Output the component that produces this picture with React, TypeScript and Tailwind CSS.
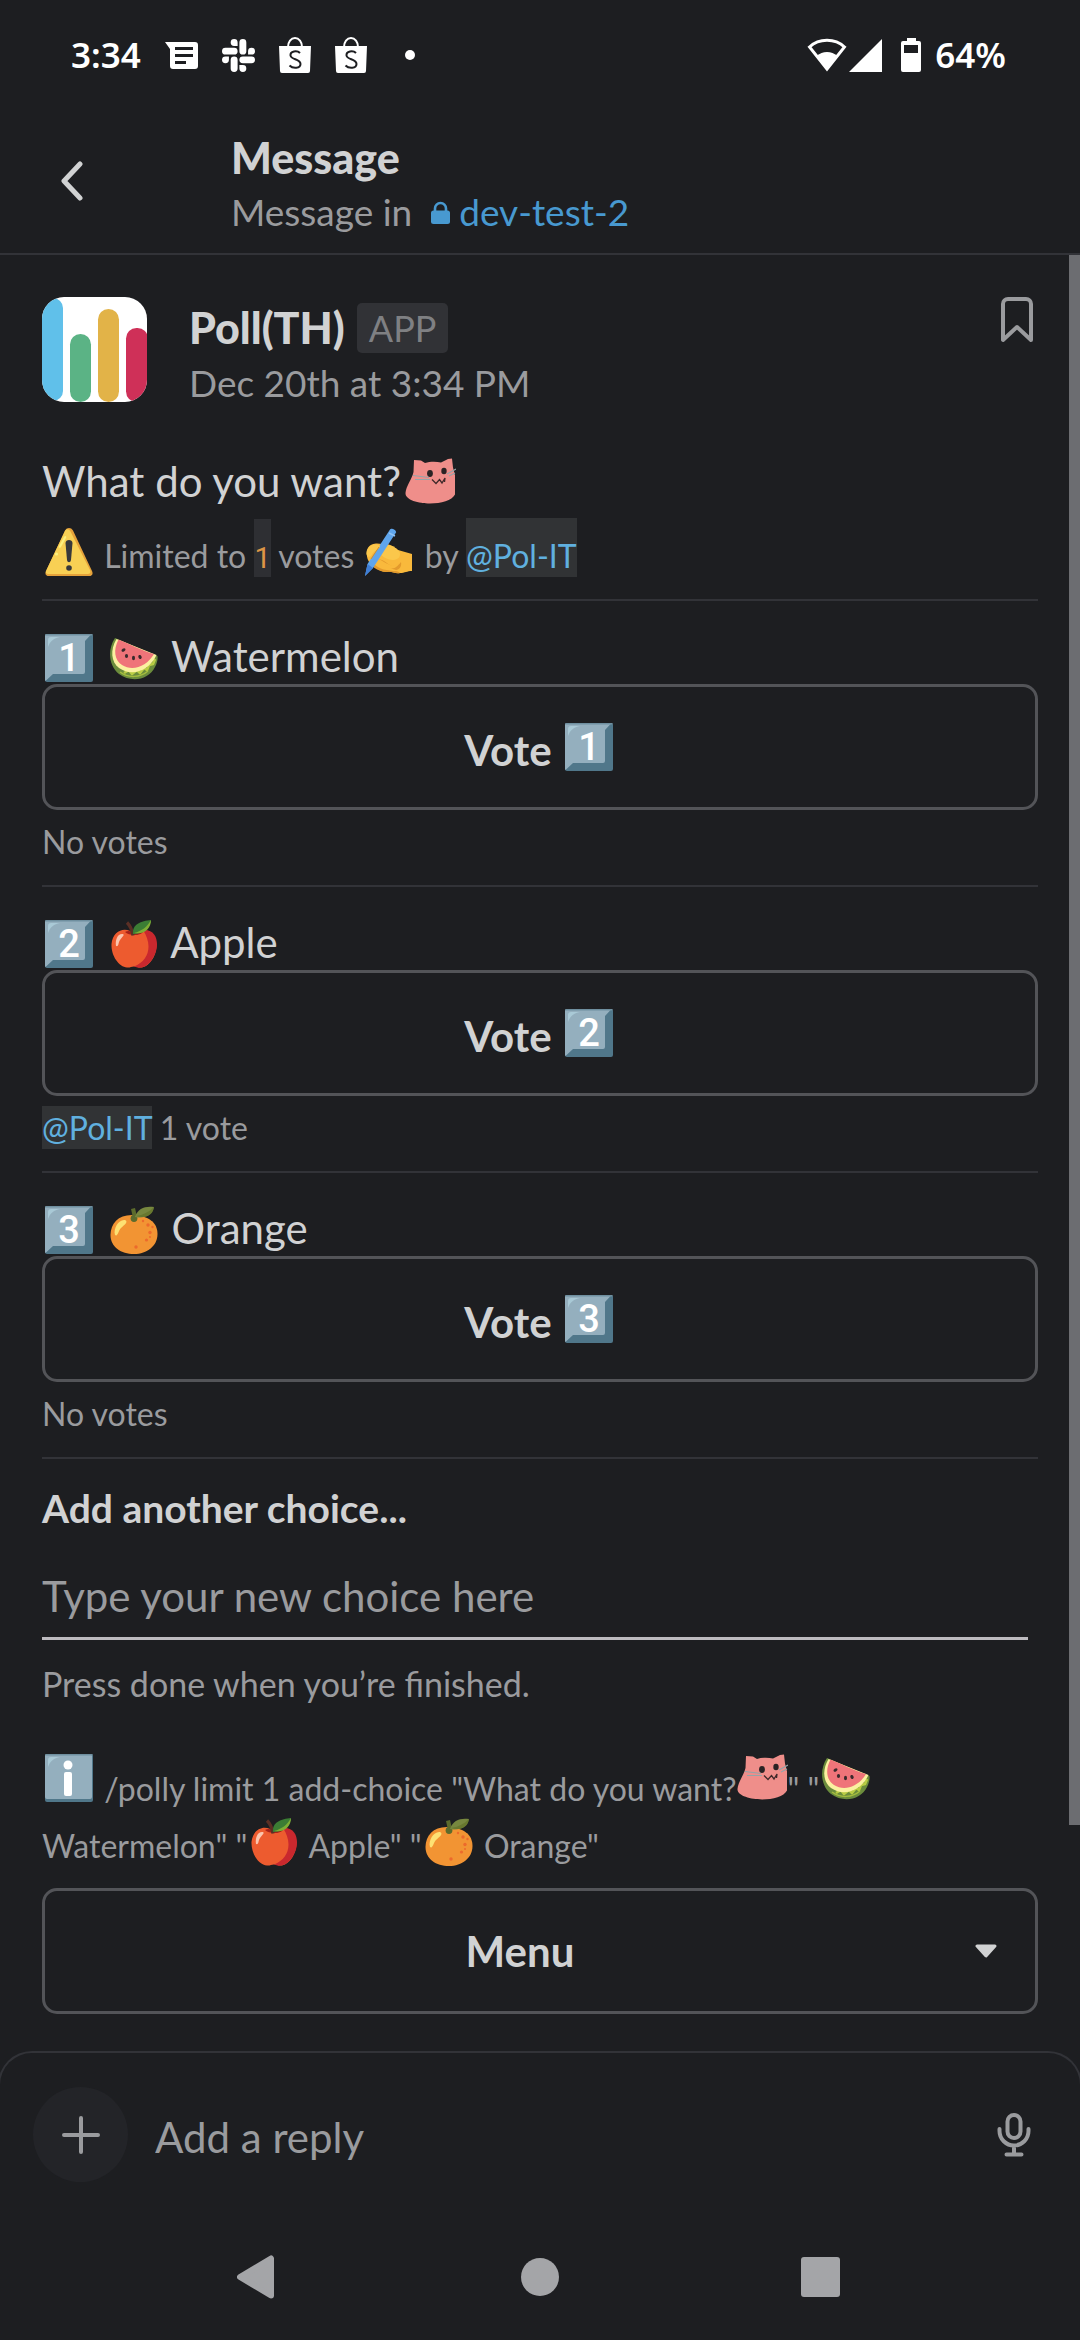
import React from "react";

type IconProps = { className?: string };

/* ---------- Status bar icons ---------- */

function ChatIcon() {
  return (
    <svg viewBox="0 0 33 27" className="h-[27px] w-[33px]" aria-hidden="true">
      <path fillRule="evenodd" fill="#fff" d="M0 0h30a3 3 0 0 1 3 3v21a3 3 0 0 1-3 3H8a3 3 0 0 1-3-3V7zM10 5v3h18V5zM10 12v3h18v-3zM10 19v3h11v-3z" />
    </svg>
  );
}

function SlackIcon() {
  return (
    <svg viewBox="0 0 24 24" className="h-[33px] w-[33px]" fill="#fff" aria-hidden="true">
      <path d="M5.04 15.16a2.53 2.53 0 0 1-2.52 2.53A2.53 2.53 0 0 1 0 15.16a2.53 2.53 0 0 1 2.52-2.52h2.52zM6.31 15.16a2.53 2.53 0 0 1 2.52-2.52 2.53 2.53 0 0 1 2.52 2.52v6.32A2.53 2.53 0 0 1 8.83 24a2.53 2.53 0 0 1-2.52-2.52z" />
      <path d="M8.83 5.04a2.53 2.53 0 0 1-2.52-2.52A2.53 2.53 0 0 1 8.83 0a2.53 2.53 0 0 1 2.52 2.52v2.52zM8.83 6.31a2.53 2.53 0 0 1 2.52 2.52 2.53 2.53 0 0 1-2.52 2.52H2.52A2.53 2.53 0 0 1 0 8.83a2.53 2.53 0 0 1 2.52-2.52z" />
      <path d="M18.96 8.83a2.53 2.53 0 0 1 2.52-2.52A2.53 2.53 0 0 1 24 8.83a2.53 2.53 0 0 1-2.52 2.52h-2.52zM17.69 8.83a2.53 2.53 0 0 1-2.52 2.52 2.53 2.53 0 0 1-2.53-2.52V2.52A2.53 2.53 0 0 1 15.17 0a2.53 2.53 0 0 1 2.52 2.52z" />
      <path d="M15.17 18.96a2.53 2.53 0 0 1 2.52 2.52A2.53 2.53 0 0 1 15.17 24a2.53 2.53 0 0 1-2.53-2.52v-2.52zM15.17 17.69a2.53 2.53 0 0 1-2.53-2.53 2.53 2.53 0 0 1 2.53-2.52h6.31A2.53 2.53 0 0 1 24 15.16a2.53 2.53 0 0 1-2.52 2.53z" />
    </svg>
  );
}

function BagIcon() {
  return (
    <svg viewBox="0 0 32 36" className="h-[36px] w-[32px]" aria-hidden="true">
      <path d="M9 10c0-5 3-9 7-9s7 4 7 9" fill="none" stroke="#fff" strokeWidth="2" />
      <path d="M0 9h32l-1 25a2 2 0 0 1-2 2H3a2 2 0 0 1-2-2z" fill="#fff" />
      <path d="M21 16c-3-3-10-2-9.500 2.500C12 23 21.500 21.500 21.500 27 21.500 31.500 14 32 10.500 28.500" fill="none" stroke="#1d1e21" strokeWidth="2" />
    </svg>
  );
}

function WifiIcon() {
  return (
    <svg viewBox="0 0 40 34" className="h-[34px] w-[40px]" aria-hidden="true">
      <path d="M2.500 9C12 0 28 0 37.500 9L20 31z" fill="none" stroke="#fff" strokeWidth="3" />
      <path d="M10 18c5-5.500 15-5.500 20 0L20 32z" fill="#fff" />
    </svg>
  );
}

function SignalIcon() {
  return (
    <svg viewBox="0 0 33 33" className="h-[33px] w-[33px]" aria-hidden="true">
      <path d="M33 0v33H0z" fill="#fff" />
    </svg>
  );
}

function BatteryIcon() {
  return (
    <svg viewBox="0 0 20 34" className="h-[34px] w-[20px]" aria-hidden="true">
      <path fillRule="evenodd" fill="#fff" d="M6 0h9v3h3a2 2 0 0 1 2 2v27a2 2 0 0 1-2 2H2a2 2 0 0 1-2-2V5a2 2 0 0 1 2-2h4zM3 7v8h14V7z" />
    </svg>
  );
}

/* ---------- Emoji ---------- */

function Keycap({ digit, className = "" }: { digit: string; className?: string }) {
  return (
    <svg viewBox="0 0 48 48" className={`inline-block h-[48px] w-[48px] ${className}`} role="img" aria-label={`keycap ${digit}`}>
      <rect width="48" height="48" rx="2" fill="#50778a" />
      <path d="M2 0h44.500L40 7v31a2 2 0 0 1-2 2H8l-7.500 7L0 46V2a2 2 0 0 1 2-2z" fill="#94afbe" />
      <path d="M0.500 0.700h47" stroke="#6f8f9f" strokeWidth="1.400" />
      <path d="M3 13V6a3 3 0 0 1 3-3h9C9 4 5 7 3 13z" fill="#a9c9d6" />
      <text x="24" y="37" textAnchor="middle" fontFamily="Roboto, sans-serif" fontWeight="500" fontSize="38" fill="#fff">
        {digit}
      </text>
    </svg>
  );
}

function InfoEmoji({ className = "" }: IconProps) {
  return (
    <svg viewBox="0 0 48 48" className={`inline-block h-[48px] w-[48px] ${className}`} role="img" aria-label="information">
      <rect width="48" height="48" rx="2" fill="#50778a" />
      <rect width="47" height="45" rx="2" fill="#94afbe" />
      <path d="M0.500 0.700h47" stroke="#6f8f9f" strokeWidth="1.400" />
      <path d="M3 13V6a3 3 0 0 1 3-3h9C9 4 5 7 3 13z" fill="#a9c9d6" />
      <circle cx="23" cy="11" r="4.500" fill="#fff" />
      <rect x="19" y="18" width="8" height="24" rx="2" fill="#fff" />
    </svg>
  );
}

function Melon({ className = "" }: IconProps) {
  return (
    <svg viewBox="0 0 48 48" className={`inline-block h-[48px] w-[48px] ${className}`} role="img" aria-label="watermelon">
      <path d="M5 4C-3 16-1 32 9 40c12 9 30 6 36-7 2-4 3-8 2.500-11z" fill="#6b8c3c" />
      <path d="M14 39l5-3 3 4 5-4 3 3 4-5 3 2 2-5 4-1 2-5" fill="none" stroke="#b9cc44" strokeWidth="2.600" strokeLinejoin="round" />
      <path d="M10 38c8 6 20 6 28-1" fill="none" stroke="#a5bd3e" strokeWidth="1.500" />
      <path d="M6.500 5C0 16 1 28 9 34c13 9 30 3 37.500-13z" fill="#fbf1a0" />
      <path d="M8.500 5.500C3 16 4.500 26 12 31c11 7 25 1 32-11C33 17 17 9 8.500 5.500z" fill="#ef7479" />
      <g fill="#3a2a2c">
        <ellipse cx="13.500" cy="16" rx="2.200" ry="1.500" transform="rotate(-35 13.500 16)" />
        <ellipse cx="16.500" cy="22" rx="1.600" ry="2" />
        <ellipse cx="23.500" cy="24" rx="1.500" ry="2.200" />
        <ellipse cx="30" cy="23" rx="1.600" ry="2.100" transform="rotate(-25 30 23)" />
      </g>
    </svg>
  );
}

function Apple({ className = "" }: IconProps) {
  return (
    <svg viewBox="0 0 48 48" className={`inline-block h-[48px] w-[48px] ${className}`} role="img" aria-label="apple">
      <path d="M24 14C17 6 3 9 1.500 24 1 36 9 47 17 47.500c3 .5 4-1 7-1s4 1.500 8 1C40 46 47 35 46.500 24 45 9 31 7 24 14z" fill="#ed5b2f" />
      <path d="M33 10c15-1 16 15 12 24-3 7-8 13-14 13.500-3 .5-5-.5-7-1C39 41 43 25 33 10z" fill="#c9282e" />
      <path d="M15 12c3 3 14 5 18 0-4-2-7-1-9 1-2-2-6-3-9-1z" fill="#a52019" />
      <path d="M17 2.500c3 3 5 7 6 13" fill="none" stroke="#5b2f25" strokeWidth="3.200" />
      <path d="M23 14C22 4 31 1 41 0c-1 8-7 14-18 14z" fill="#3b7d34" />
      <path d="M24 13C32 11 37 7 41 0c0 8-6 15-17 13z" fill="#7fae35" />
      <path d="M6 26c-1-7 2-13 7-12 2 1-1 3-3 6s-1 7-4 6z" fill="#fbc5ae" />
    </svg>
  );
}

function Orange({ className = "" }: IconProps) {
  return (
    <svg viewBox="0 0 48 48" className={`inline-block h-[48px] w-[48px] ${className}`} role="img" aria-label="tangerine">
      <path d="M24 9C9 8 .5 17 .5 29 .5 41 11 48 24 48s23.500-8 23.500-20C47.500 16 38 10 24 9z" fill="#f29433" />
      <path d="M5 29c-2-7 4-16 10-15 4 2-1 5-4 8s-3 9-6 7z" fill="#fde173" />
      <path d="M23 12L21 3l4-1 2 9z" fill="#5c6b2c" />
      <circle cx="24" cy="12.500" r="3.400" fill="#5c6b2c" />
      <path d="M25 11C28 2 35 0 44 1c-2 8-9 12-19 10z" fill="#77873f" />
      <path d="M26 10C33 9 39 6 44 1c-1 8-8 12-18 9z" fill="#68782f" />
      <g fill="#ec6a2c">
        <circle cx="33" cy="15" r="1.200" /><circle cx="38" cy="19" r="1.700" /><circle cx="42.500" cy="21" r="1.200" />
        <circle cx="40" cy="26.500" r="1.700" /><circle cx="36.500" cy="34" r="1.600" /><circle cx="26" cy="41" r="1.700" /><circle cx="40" cy="31" r="1" />
      </g>
    </svg>
  );
}

function Warning({ className = "" }: IconProps) {
  return (
    <svg viewBox="0 0 48 48" className={`inline-block h-[48px] w-[48px] ${className}`} role="img" aria-label="warning">
      <path d="M20 2.500c2-3.300 6-3.300 8 0L47 43c1.500 3 0 5-3 5H4c-3 0-4.500-2-3-5z" fill="#e5a23a" />
      <path d="M20 3c1.500-2.500 4-2 5.500.5L45 42c1 3 0 4-3 4H4c-3 0-4-1.500-2.500-4z" fill="#f8d054" />
      <path d="M14 18l5-9c1-2 3-1 2 1l-5 9c-1 1.500-3 1-2-1z" fill="#fdf07e" />
      <circle cx="11.500" cy="26" r="1.600" fill="#fdf07e" />
      <path d="M20.500 15c0-4 7-4 7 0l-1.500 17c-.5 3-3.500 3-4 0z" fill="#37383b" />
      <circle cx="24" cy="40" r="2.800" fill="#37383b" />
    </svg>
  );
}

function WritingHand({ className = "" }: IconProps) {
  return (
    <svg viewBox="0 0 48 48" className={`inline-block h-[48px] w-[48px] ${className}`} role="img" aria-label="writing hand">
      <path d="M3 20c3-5 9-5 14-4 6-1 11 2 16 6l14 4v17c-5 0-7 2-12 2-5 1-8-2-13-1-5 0-8-2-13-5-6-4-9-11-6-19z" fill="#f9b93c" />
      <path d="M17 17c7-1 12 1 17 6 3 5-1 9-6 9-6 0-12-4-15-9z" fill="#fbc74b" />
      <path d="M12 32c6-2 9 4 15 6 4 1 7-1 9-4 1 5-2 9-8 8 3 1 5 1 7 3-5 1-8-2-13-1-6 0-12-3-16-7z" fill="#e39a2d" />
      <path d="M10 31c5-1 9 4 15 6 4 1 7 0 9-2-1 4-5 6-9 5 2 1 5 1 7 3-10 0-18-2-23-7z" fill="#f9b93c" />
      <path d="M25 1.500c1-2 7 1 6 3L8 40l-8 8 2.500-12z" fill="#5fa5ec" />
      <path d="M2.500 36l5.500 4-8 8z" fill="#3f7ed6" />
      <path d="M24 5l6 3" stroke="#8fc3f5" strokeWidth="1.400" />
      <path d="M2 22c2-5 9-7 13-4 0 3-6 4-9 10-3 2-6-1-4-6z" fill="#fbc74b" />
      <path d="M14 19l-8 12" stroke="#d68f25" strokeWidth="1" />
    </svg>
  );
}

function Cat({ className = "" }: IconProps) {
  return (
    <svg viewBox="0 0 51 46" className={`inline-block h-[46px] w-[51px] ${className}`} role="img" aria-label="pink cat">
      <path d="M9 2l7 .5 4 2.500c5-1.500 11-1.500 16-.5L43 1l4-.5 1 9 2 8v19c-3 6-14 9-25 9S0 42 .5 35C1 28 7 21 8.500 14z" fill="#ef8e8a" />
      <ellipse cx="25" cy="15.500" rx="2.900" ry="3.400" fill="#2a2324" />
      <ellipse cx="39" cy="13" rx="2.700" ry="3.300" fill="#2a2324" />
      <path d="M27 21.500l4 4 3.500-4 2.500 3.500 3-5-.5 4" fill="none" stroke="#3f292a" strokeWidth="1.300" />
      <path d="M8 17.500l16 2M10 21.500h15M42 16l9-5M44 18l6-3" fill="none" stroke="#94a4a8" strokeWidth="1.200" />
    </svg>
  );
}

/* ---------- Message content ---------- */

const EMOJI_GAP = "mx-[3px]";

function Mention() {
  return (
    <a href="#pol-it" className="bg-[#313335] py-[2px] text-[#60b0df]">
      @Pol-IT
    </a>
  );
}

function Divider() {
  return <hr className="h-[2px] border-0 bg-[#323338]" />;
}

type Choice = {
  digit: string;
  label: string;
  Emoji: (p: IconProps) => React.JSX.Element;
  votes: React.ReactNode;
};

const choices: Choice[] = [
  { digit: "1", label: "Watermelon", Emoji: Melon, votes: "No votes" },
  { digit: "2", label: "Apple", Emoji: Apple, votes: <><Mention /> 1 vote</> },
  { digit: "3", label: "Orange", Emoji: Orange, votes: "No votes" },
];

function ChoiceBlock({ digit, label, Emoji, votes }: Choice) {
  return (
    <section>
      <p className="mt-[27px] text-[42px] leading-[56px]">
        <Keycap digit={digit} className={`${EMOJI_GAP} align-[-10px]`} />{" "}
        <Emoji className={`${EMOJI_GAP} align-[-10px]`} /> {label}
      </p>
      <button type="button" className="block h-[126px] w-full rounded-[15px] border-3 border-[#535458] pt-[6px] text-[42px] leading-[60px] font-bold">
        Vote <Keycap digit={digit} className={`${EMOJI_GAP} align-[-5px]`} />
      </button>
      <p className="mt-[10px] mb-[21px] text-[32px] leading-[44px] text-[#9a9b9e]">{votes}</p>
      <Divider />
    </section>
  );
}

function StatusBar() {
  return (
    <div className="flex h-[110px] items-center justify-between pr-[74px] pl-[71px] font-['Noto_Sans',sans-serif] text-[35px] font-semibold text-white">
      <div className="flex items-center gap-[24px]">
        <span>3:34</span>
        <ChatIcon />
        <SlackIcon />
        <BagIcon />
        <BagIcon />
        <span className="ml-[14px] size-[10px] rounded-full bg-white" />
      </div>
      <div className="flex items-center">
        <WifiIcon />
        <span className="ml-[2px]"><SignalIcon /></span>
        <span className="ml-[19px]"><BatteryIcon /></span>
        <span className="ml-[14px]">64%</span>
      </div>
    </div>
  );
}

function Header() {
  return (
    <header className="border-b-2 border-[#323338]">
      <StatusBar />
      <div className="flex h-[143px] items-start">
        <button type="button" aria-label="Back" className="mt-[41px] ml-[50px] p-[10px]">
          <svg viewBox="0 0 24 40" className="h-[40px] w-[24px]" fill="none" stroke="#d1d2d3" strokeWidth="5" strokeLinecap="round" strokeLinejoin="round" aria-hidden="true">
            <path d="M20 3L4 20l16 17" />
          </svg>
        </button>
        <div className="ml-[137px] pt-[21px]">
          <h1 className="text-[43px] leading-[54px] font-black">Message</h1>
          <p className="flex items-center text-[37px] leading-[54px] text-[#9a9b9e]">
            Message in
            <a href="#dev-test-2" className="ml-[19px] flex items-center gap-[9px] text-[#4899d0]">
              <svg viewBox="0 0 19 23" className="h-[23px] w-[19px]" aria-hidden="true">
                <path d="M4 10V7.500a5.500 5.500 0 0 1 11 0V10" fill="none" stroke="currentColor" strokeWidth="2.600" />
                <rect y="9.500" width="19" height="13.500" rx="2.500" fill="currentColor" />
              </svg>
              dev-test-2
            </a>
          </p>
        </div>
      </div>
    </header>
  );
}

function Avatar() {
  return (
    <svg viewBox="0 0 105 105" className="size-[105px] shrink-0 rounded-[22px] bg-white" role="img" aria-label="Poll app">
      <rect x="-10" y="1" width="31" height="103" rx="10" fill="#60c0ea" />
      <rect x="28" y="37" width="21" height="68" rx="10.500" fill="#5bb385" />
      <rect x="56" y="12" width="21" height="93" rx="10.500" fill="#e2b348" />
      <rect x="84" y="31" width="22" height="74" rx="10.500" fill="#cf3058" />
    </svg>
  );
}

function Composer() {
  return (
    <form className="-mx-[2px] flex items-center rounded-t-[34px] border-2 border-b-0 border-[#323338] pt-[34px] pr-[49px] pb-[32px] pl-[33px]" onSubmit={(e) => e.preventDefault()}>
      <button type="button" aria-label="Add attachment" className="flex size-[95px] items-center justify-center rounded-full bg-[#232428]">
        <svg viewBox="0 0 38 38" className="size-[38px]" stroke="#9a9b9e" strokeWidth="4" strokeLinecap="round" aria-hidden="true">
          <path d="M19 2v34M2 19h34" />
        </svg>
      </button>
      <input aria-label="Add a reply" placeholder="Add a reply" className="ml-[27px] h-[95px] min-w-0 flex-1 bg-transparent pt-[4px] text-[42px] outline-none placeholder:text-[#9a9b9e]" />
      <button type="button" aria-label="Record audio">
        <svg viewBox="0 0 34 44" className="h-[44px] w-[34px]" fill="none" stroke="#9a9b9e" strokeWidth="4" strokeLinecap="round" aria-hidden="true">
          <rect x="10.500" y="2" width="13" height="23" rx="6.500" />
          <path d="M2.500 16v2a14.500 14.500 0 0 0 29 0v-2M17 33v8M9.500 41.500h15" />
        </svg>
      </button>
    </form>
  );
}

function NavBar() {
  return (
    <nav className="flex h-[126px] items-center justify-evenly" aria-label="System navigation">
      <button type="button" aria-label="Back" className="size-[44px]">
        <svg viewBox="0 0 44 44" fill="#a4a5a8" stroke="#a4a5a8" strokeWidth="6" strokeLinejoin="round" aria-hidden="true">
          <path d="M3 22L34 3.500v37z" />
        </svg>
      </button>
      <button type="button" aria-label="Home" className="size-[44px]">
        <svg viewBox="0 0 44 44" fill="#a4a5a8" aria-hidden="true"><circle cx="22" cy="22" r="19" /></svg>
      </button>
      <button type="button" aria-label="Recent apps" className="size-[44px]">
        <svg viewBox="0 0 44 44" fill="#a4a5a8" aria-hidden="true"><rect x="2" y="2" width="39" height="40" rx="3" /></svg>
      </button>
    </nav>
  );
}

export default function App() {
  return (
    <div className="flex min-h-screen flex-col bg-[#1d1e21] font-['Lato',sans-serif] text-[#d1d2d3]">
      <Header />
      <main className="relative flex-1 px-[42px] pt-[42px] pb-[37px]">
        <div className="absolute top-0 right-0 bottom-[226px] w-[11px] bg-[#6c6d71]" />

        <div className="flex items-start">
          <Avatar />
          <div className="ml-[42px] flex-1 pt-[4px]">
            <div className="flex items-center gap-[12px]">
              <h2 className="text-[43px] leading-[54px] font-black">Poll(TH)</h2>
              <span className="rounded-[5px] bg-[#313236] px-[12px] text-[36px] leading-[50px] text-[#7f8083]">APP</span>
            </div>
            <p className="text-[37px] leading-[56px] text-[#9a9b9e]">Dec 20th at 3:34 PM</p>
          </div>
          <button type="button" aria-label="Save message" className="mr-[4px]">
            <svg viewBox="0 0 34 46" className="h-[46px] w-[34px]" fill="none" stroke="#9a9b9e" strokeWidth="4" strokeLinejoin="round" aria-hidden="true">
              <path d="M3 43V7a5 5 0 0 1 5-5h18a5 5 0 0 1 5 5v36L17 30z" />
            </svg>
          </button>
        </div>

        <p className="mt-[40px] text-[42px] leading-[60px]">
          What do you want?<Cat className="ml-[4px] align-[-7px]" />
        </p>
        <p className="mt-[10px] mb-[8px] text-[32px] leading-[70px] text-[#9a9b9e]">
          <Warning className={`${EMOJI_GAP} align-[-8px]`} /> Limited to{" "}
          <code className="bg-[#2e2f33] pt-[22px] pb-[2px] font-['Roboto',sans-serif] text-[29px] leading-none text-[#dd9646]">1</code> votes{" "}
          <WritingHand className={`${EMOJI_GAP} align-[-8px]`} /> by{" "}
          <a href="#pol-it" className="bg-[#313335] pt-[18px] pb-[2px] text-[#60b0df]">@Pol-IT</a>
        </p>
        <Divider />

        {choices.map((c) => (
          <ChoiceBlock key={c.digit} {...c} />
        ))}

        <label htmlFor="choice" className="mt-[24px] block text-[39px] leading-[50px] font-bold">Add another choice...</label>
        <div className="pr-[10px]">
          <input id="choice" placeholder="Type your new choice here" className="mt-[22px] block h-[85px] w-full border-b-3 border-[#bdbbbf] bg-transparent text-[42px] outline-none placeholder:text-[#9a9b9e]" />
        </div>
        <p className="mt-[22px] text-[34px] leading-[44px] text-[#9a9b9e]">Press done when you’re finished.</p>

        <p className="mt-[48px] text-[32px] leading-[57px] text-[#9a9b9e]">
          <InfoEmoji className={`${EMOJI_GAP} align-[-1px]`} /> /polly limit 1 add-choice "What do you want?
          <Cat className="align-[1px]" />" "<Melon className={`${EMOJI_GAP} align-[-1px]`} /> Watermelon" "
          <Apple className={`${EMOJI_GAP} align-[-8px]`} /> Apple" "<Orange className={`${EMOJI_GAP} align-[-8px]`} /> Orange"
        </p>

        <div className="relative mt-[14px]">
          <select aria-label="Menu" className="block h-[126px] w-full appearance-none rounded-[15px] border-3 border-[#535458] bg-transparent pr-[40px] text-center text-[42px] font-bold outline-none [text-align-last:center]">
            <option>Menu</option>
          </select>
          <svg viewBox="0 0 22 14" className="pointer-events-none absolute top-[56px] right-[41px] h-[14px] w-[22px]" fill="#d1d2d3" stroke="#d1d2d3" strokeWidth="3" strokeLinejoin="round" aria-hidden="true">
            <path d="M2 2h18l-9 10z" />
          </svg>
        </div>
      </main>
      <Composer />
      <NavBar />
    </div>
  );
}
